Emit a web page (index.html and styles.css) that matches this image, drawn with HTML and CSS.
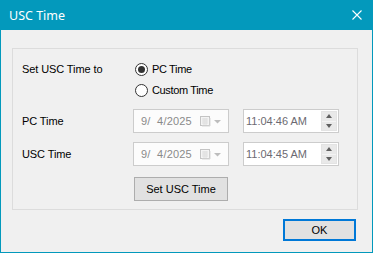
FILE: index.html
```html
<!DOCTYPE html>
<html>
<head>
  <meta charset="utf-8">
  <title>USC Time</title>
  <link rel="stylesheet" href="styles.css">
</head>
<body>

<div class="window">
  <div class="titlebar">
    <span class="title">USC Time</span>
    <svg class="close" width="10" height="10" viewBox="0 0 10 10">
      <path d="M0.5 0.5 L9.5 9.5 M9.5 0.5 L0.5 9.5" stroke="#fff" stroke-width="1.1" fill="none"/>
    </svg>
  </div>

  <div class="content">
    <div class="groupbox">
      <div class="row row-radio">
        <label class="caption">Set USC Time to</label>
        <span class="radio checked"><span class="dot"></span></span>
        <span class="radio-text">PC Time</span>
      </div>
      <div class="row row-radio second">
        <span class="caption"></span>
        <span class="radio"></span>
        <span class="radio-text">Custom Time</span>
      </div>

      <div class="row row-picker first-picker">
        <label class="caption">PC Time</label>
        <div class="datepick">
          <span class="value">9/&nbsp; 4/2025</span>
          <svg class="cal" width="21" height="11" viewBox="0 0 21 11">
            <rect x="0.5" y="0.5" width="9" height="9" fill="#f4f4f4" stroke="#c4c4c4"/>
            <path d="M2 3h6M2 5h6M2 7h6M4 2v7M6 2v7" stroke="#dedede" stroke-width="1"/>
            <path d="M10 2v8h-8" stroke="#d8d8d8" fill="none"/>
            <path d="M14 4h7l-3.5 3.5z" fill="#bdbdbd"/>
          </svg>
        </div>
        <div class="timepick">
          <span class="value">11:04:46 AM</span>
          <div class="spin">
            <span class="spin-up"></span>
            <span class="spin-down"></span>
          </div>
        </div>
      </div>

      <div class="row row-picker">
        <label class="caption">USC Time</label>
        <div class="datepick">
          <span class="value">9/&nbsp; 4/2025</span>
          <svg class="cal" width="21" height="11" viewBox="0 0 21 11">
            <rect x="0.5" y="0.5" width="9" height="9" fill="#f4f4f4" stroke="#c4c4c4"/>
            <path d="M2 3h6M2 5h6M2 7h6M4 2v7M6 2v7" stroke="#dedede" stroke-width="1"/>
            <path d="M10 2v8h-8" stroke="#d8d8d8" fill="none"/>
            <path d="M14 4h7l-3.5 3.5z" fill="#bdbdbd"/>
          </svg>
        </div>
        <div class="timepick">
          <span class="value">11:04:45 AM</span>
          <div class="spin">
            <span class="spin-up"></span>
            <span class="spin-down"></span>
          </div>
        </div>
      </div>

      <div class="row row-button">
        <button type="button" class="btn">Set USC Time</button>
      </div>
    </div>

    <div class="footer">
      <button type="button" class="btn ok">OK</button>
    </div>
  </div>
</div>

</body>
</html>
```

FILE: styles.css
```css
body {
  margin: 0;
  background: #f0f0f0;
  font-family: "Liberation Sans", Arial, sans-serif;
  font-size: 11px;
  color: #000;
}

.window {
  width: 373px;
  height: 253px;
  box-sizing: border-box;
  border: 1px solid #0399bc;
  border-top: 0;
  background: #f0f0f0;
}

.titlebar {
  height: 30px;
  background: #0399bc;
  display: flex;
  align-items: center;
  justify-content: space-between;
  padding: 0 10px 0 9px;
  margin: 0 -1px;
  box-sizing: border-box;
}

.title {
  font-family: "Noto Sans", "Open Sans", sans-serif;
  font-size: 12.5px;
  color: #fff;
  padding-top: 1px;
}

.close {
  display: block;
  margin-right: 1px;
}

.content {
  padding: 18px 14px 0 11px;
}

.groupbox {
  height: 162px;
  box-sizing: border-box;
  border: 1px solid #dcdcdc;
  padding: 13px 0 0 9px;
}

.row {
  display: flex;
  align-items: center;
}

.caption {
  width: 111px;
  flex: none;
  letter-spacing: -0.1px;
}

.row-radio {
  height: 14px;
}

.row-radio.second {
  margin-top: 7px;
}

.radio {
  width: 13px;
  height: 13px;
  box-sizing: border-box;
  border: 1px solid #333;
  border-radius: 50%;
  background: #fff;
  margin-left: 2px;
  display: flex;
  align-items: center;
  justify-content: center;
}

.radio .dot {
  width: 7px;
  height: 7px;
  border-radius: 50%;
  background: #333;
}

.radio-text {
  margin-left: 4px;
  letter-spacing: -0.35px;
}

.row-picker {
  height: 24px;
  margin-top: 9px;
}

.row-picker.first-picker {
  margin-top: 12px;
}

.datepick,
.timepick {
  width: 96px;
  height: 24px;
  box-sizing: border-box;
  border: 1px solid #cccccc;
  display: flex;
  align-items: center;
}

.datepick {
  background: #fcfcfc;
  color: #8a8a8a;
  padding-left: 7px;
}

.datepick .value {
  flex: 1;
  letter-spacing: 0.2px;
}

.cal {
  display: block;
  margin: 1px 7px 0 0;
}

.timepick {
  background: #fff;
  color: #6c6a72;
  margin-left: 14px;
  padding-left: 2px;
}

.timepick .value {
  flex: 1;
  letter-spacing: 0;
}

.spin {
  width: 16px;
  height: 20px;
  margin-right: 1px;
  display: flex;
  flex-direction: column;
  border: 1px solid #e3e3e3;
  box-sizing: border-box;
}

.spin-up,
.spin-down {
  flex: 1;
  background: #e9e9e9;
  display: flex;
  align-items: center;
  justify-content: center;
}

.spin-up {
  border-bottom: 1px solid #f4f4f4;
}

.spin-up::after {
  content: "";
  border-left: 3.5px solid transparent;
  border-right: 3.5px solid transparent;
  border-bottom: 4px solid #606060;
}

.spin-down::after {
  content: "";
  border-left: 3.5px solid transparent;
  border-right: 3.5px solid transparent;
  border-top: 4px solid #606060;
}

.row-button {
  margin-top: 11px;
  padding-left: 112px;
}

.btn {
  font-family: "Liberation Sans", Arial, sans-serif;
  font-size: 11px;
  color: #000;
  background: #e1e1e1;
  border: 1px solid #adadad;
  height: 24px;
  width: 94px;
  padding: 0;
  margin: 0;
}

.footer {
  display: flex;
  justify-content: flex-end;
  margin-top: 9px;
  padding-right: 2px;
}

.btn.ok {
  width: 73px;
  height: 22px;
  border: 2px solid #0078d7;
}
```
